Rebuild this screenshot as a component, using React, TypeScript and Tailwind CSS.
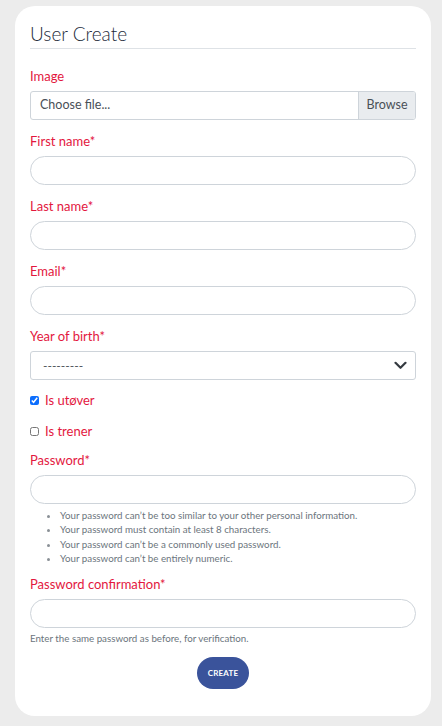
import React, { useState } from "react";

const labelCls = "block text-[13px] leading-[19px] text-[#e3173e]";
const inputCls =
  "block w-full h-[29px] rounded-full border border-[#ced4da] bg-white px-3 text-[13px] text-[#495057] outline-none";

const Field = ({ label, type = "text" }: { label: string; type?: string }) => (
  <div className="mb-[12px]">
    <label className={labelCls}>{label}</label>
    <input type={type} className={`${inputCls} mt-[5px]`} />
  </div>
);

const App = () => {
  const [athlete, setAthlete] = useState(true);
  const [coach, setCoach] = useState(false);

  const hints = [
    "Your password can\u2019t be too similar to your other personal information.",
    "Your password must contain at least 8 characters.",
    "Your password can\u2019t be a commonly used password.",
    "Your password can\u2019t be entirely numeric.",
  ];

  return (
    <div
      className="min-h-screen bg-[#ececec] pt-[6px] pb-[10px] pl-[15px] pr-[11px]"
      style={{ fontFamily: '"Segoe UI", Lato, sans-serif' }}
    >
      <div className="rounded-[20px] bg-white px-[15px] pt-[15px] pb-[27px]">
        <h1 className="border-b border-[#dee2e6] pb-[2px] text-[19px] leading-[25px] font-light text-[#1d2b3a]">
          User Create
        </h1>

        <div className="mt-[18px] mb-[12px]">
          <label className={labelCls}>Image</label>
          <div className="mt-[5px] flex h-[29px] overflow-hidden rounded-[3px] border border-[#ced4da] text-[12.5px]">
            <span className="flex flex-1 items-center pl-[9px] text-[#495057]">
              Choose file...
            </span>
            <span className="flex w-[57px] items-center justify-center border-l border-[#ced4da] bg-[#e9ecef] text-[#495057]">
              Browse
            </span>
          </div>
        </div>

        <Field label="First name*" />
        <Field label="Last name*" />
        <Field label="Email*" type="email" />

        <div className="mb-[10px]">
          <label className={labelCls}>Year of birth*</label>
          <div className="mt-[5px] flex h-[29px] items-center justify-between rounded-[3px] border border-[#ced4da] pl-[12px] pr-[8px] text-[12px] text-[#495057]">
            <span>---------</span>
            <svg width="13" height="9" viewBox="0 0 13 9" fill="none">
              <path
                d="M1.5 1.8l5 5 5-5"
                stroke="#343a40"
                strokeWidth="2.2"
                strokeLinecap="round"
                strokeLinejoin="round"
              />
            </svg>
          </div>
        </div>

        <label className="flex h-[21px] items-center gap-[6px] text-[13px] text-[#e3173e]">
          <input
            type="checkbox"
            checked={athlete}
            onChange={(e) => setAthlete(e.target.checked)}
            className="h-[9px] w-[9px] accent-[#0d6efd]"
          />
          Is utøver
        </label>
        <label className="mt-[10px] flex h-[21px] items-center gap-[6px] text-[13px] text-[#e3173e]">
          <input
            type="checkbox"
            checked={coach}
            onChange={(e) => setCoach(e.target.checked)}
            className="h-[9px] w-[9px]"
          />
          Is trener
        </label>

        <div className="mt-[9px]">
          <label className={labelCls}>Password*</label>
          <input type="password" className={`${inputCls} mt-[5px]`} />
          <ul className="mt-[4px] list-disc pl-[30px] text-[9.75px] leading-[14.3px] text-[#6c757d] marker:text-[#8a9096]">
            {hints.map((h) => (
              <li key={h}>{h}</li>
            ))}
          </ul>
        </div>

        <div className="mt-[10px]">
          <label className={labelCls}>Password confirmation*</label>
          <input type="password" className={`${inputCls} mt-[5px]`} />
          <p className="mt-[3px] text-[9.75px] leading-[14px] text-[#6c757d]">
            Enter the same password as before, for verification.
          </p>
        </div>

        <div className="mt-[12px] flex justify-center">
          <button className="h-[32px] w-[52px] rounded-full bg-[#3a539b] text-[8px] font-bold tracking-[0.2px] text-white">
            CREATE
          </button>
        </div>
      </div>
    </div>
  );
};

export default App;
